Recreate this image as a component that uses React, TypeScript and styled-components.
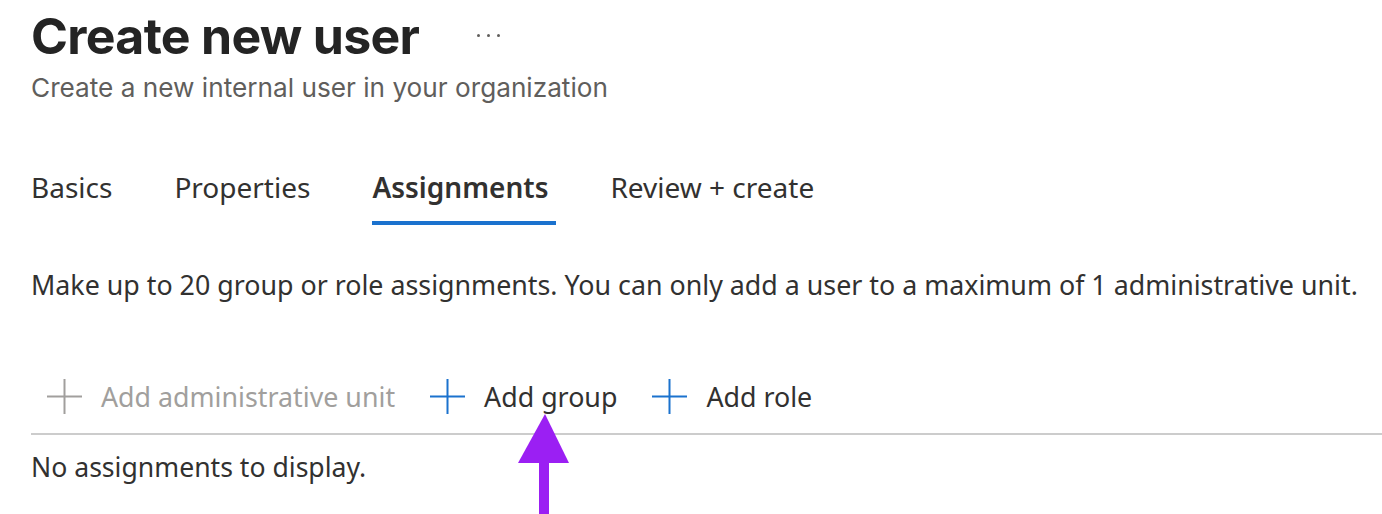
import { createGlobalStyle, styled } from 'styled-components'

const GlobalStyle = createGlobalStyle`
    html, body {
        margin: 0;
        padding: 0;
        background: #ffffff;
    }
    body {
        font-family: "Noto Sans", "Open Sans", sans-serif;
        color: #323130;
    }
`

const Page = styled.div`
    position: relative;
    width: 1382px;
    height: 514px;
    overflow: hidden;
    padding-left: 31px;
    box-sizing: border-box;
`

const TitleRow = styled.div`
    display: flex;
    align-items: center;
    height: 72px;
`

const Title = styled.h1`
    margin: 0;
    font-family: Inter, "Liberation Sans", sans-serif;
    font-weight: 700;
    font-size: 50px;
    letter-spacing: -0.7px;
    line-height: 72px;
    color: #242424;
`

const MoreDots = styled.div`
    display: flex;
    gap: 7px;
    margin-left: 58px;
    margin-top: -2px;

    span {
        width: 3px;
        height: 3px;
        border-radius: 50%;
        background: #605e5c;
    }
`

const Subtitle = styled.p`
    margin: 0;
    font-family: Inter, "Liberation Sans", sans-serif;
    font-size: 26.2px;
    line-height: 32px;
    color: #605e5c;
`

const TabBar = styled.div`
    display: flex;
    gap: 54px;
    margin-top: 63px;
`

const Tab = styled.div<{ $active?: boolean }>`
    font-size: 28px;
    line-height: 40px;
    padding: 0 8px 14px 0;
    border-bottom: 4px solid ${p => p.$active ? '#1b72ce' : 'transparent'};
    font-weight: ${p => p.$active ? 600 : 400};
    color: #323130;
`

const Description = styled.p`
    margin: 42px 0 0;
    font-size: 26.8px;
    line-height: 36px;
    color: #323130;
    white-space: nowrap;
`

const Toolbar = styled.div`
    display: flex;
    align-items: center;
    gap: 35px;
    margin-top: 73px;
    padding: 0 0 17px 16px;
    border-bottom: 2px solid #cccccc;
`

const ToolButton = styled.div<{ $disabled?: boolean }>`
    display: flex;
    align-items: center;
    gap: 19px;
    height: 40px;
    font-size: 26.8px;
    color: ${p => p.$disabled ? '#a19f9d' : '#323130'};

    svg {
        color: ${p => p.$disabled ? '#a19f9d' : '#1b72ce'};
    }
`

const Empty = styled.p`
    margin: 16px 0 0;
    font-size: 26.6px;
    line-height: 32px;
    color: #323130;
`

const Arrow = styled.svg`
    position: absolute;
    left: 518px;
    top: 414px;
`

function PlusIcon() {
    return (
        <svg width="35" height="35" viewBox="0 0 35 35">
            <path d="M17.5 0 V35 M0 17.5 H35" stroke="currentColor" strokeWidth="2" fill="none" />
        </svg>
    )
}

export default function App() {
    return (
        <Page>
            <GlobalStyle />
            <TitleRow>
                <Title>Create new user</Title>
                <MoreDots><span /><span /><span /></MoreDots>
            </TitleRow>
            <Subtitle>Create a new internal user in your organization</Subtitle>

            <TabBar>
                <Tab>Basics</Tab>
                <Tab>Properties</Tab>
                <Tab $active>Assignments</Tab>
                <Tab>Review + create</Tab>
            </TabBar>

            <Description>
                Make up to 20 group or role assignments. You can only add a user to a maximum of 1 administrative unit.
            </Description>

            <Toolbar>
                <ToolButton $disabled><PlusIcon />Add administrative unit</ToolButton>
                <ToolButton><PlusIcon />Add group</ToolButton>
                <ToolButton><PlusIcon />Add role</ToolButton>
            </Toolbar>

            <Empty>No assignments to display.</Empty>

            <Arrow width="51" height="100" viewBox="0 0 51 100">
                <polygon points="27,0 0,49 51,49" fill="#9b1ff3" />
                <rect x="21" y="48" width="10" height="52" fill="#9b1ff3" />
            </Arrow>
        </Page>
    )
}
